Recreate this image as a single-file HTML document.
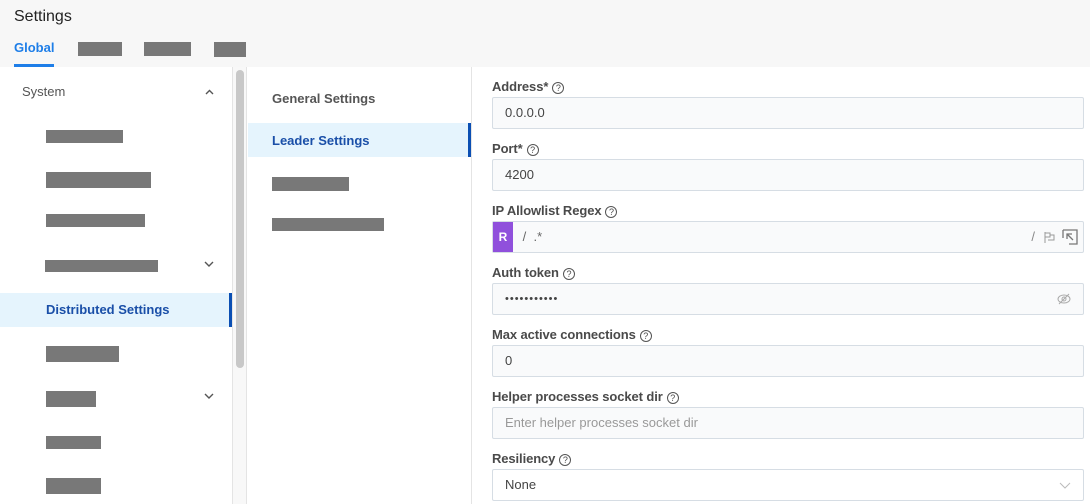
<!DOCTYPE html>
<html><head><style>
*{box-sizing:border-box;margin:0;padding:0}
body{width:1090px;height:504px;overflow:hidden;background:#fff;font-family:"Liberation Sans",sans-serif;position:relative;color:#333}
.a{position:absolute}
.r{position:absolute;background:#787878}
.lbl{position:absolute;left:492px;font-size:13px;font-weight:bold;color:#4a4a4a;letter-spacing:-0.1px}
.q{display:inline-block;width:12px;height:12px;border:1px solid #555;border-radius:50%;font-size:9px;line-height:10px;text-align:center;font-weight:normal;margin-left:4px;vertical-align:0px}
.in{position:absolute;left:492px;width:592px;height:32px;border:1px solid #d6dde4;background:#f9fafb;border-radius:2px;font-size:13px;color:#444;padding-left:12px;line-height:30px}
</style></head><body>
<div class="a" style="left:0;top:0;width:1090px;height:67px;background:#f7f7f7"></div>
<div class="a" style="left:14px;top:8px;font-size:16px;color:#222">Settings</div>
<div class="a" style="left:14px;top:40px;font-size:13px;font-weight:bold;color:#1e7ee8">Global</div>
<div class="a" style="left:14px;top:64px;width:40px;height:3px;background:#1e7ee8"></div>
<div class="r" style="left:78px;top:42px;width:44px;height:14px"></div>
<div class="r" style="left:144px;top:42px;width:47px;height:14px"></div>
<div class="r" style="left:214px;top:42px;width:32px;height:15px"></div>

<div class="a" style="left:22px;top:84px;font-size:13px;color:#555">System</div>
<svg class="a" style="left:205px;top:89px" width="9" height="6"><path d="M1 5l3.5-3.5L8 5" stroke="#555" stroke-width="1.4" fill="none"/></svg>
<div class="r" style="left:46px;top:130px;width:77px;height:13px"></div>
<div class="r" style="left:46px;top:172px;width:105px;height:16px"></div>
<div class="r" style="left:46px;top:214px;width:99px;height:13px"></div>
<div class="r" style="left:45px;top:260px;width:113px;height:12px"></div>
<svg class="a" style="left:204px;top:261px" width="10" height="6"><path d="M1 1l4 4 4-4" stroke="#555" stroke-width="1.4" fill="none"/></svg>
<div class="a" style="left:0;top:293px;width:232px;height:34px;background:#e5f4fd"></div>
<div class="a" style="left:229px;top:293px;width:3px;height:34px;background:#0b4fb3"></div>
<div class="a" style="left:46px;top:302px;font-size:13px;font-weight:bold;color:#1a4fa8">Distributed Settings</div>
<div class="r" style="left:46px;top:346px;width:73px;height:16px"></div>
<div class="r" style="left:46px;top:391px;width:50px;height:16px"></div>
<svg class="a" style="left:204px;top:393px" width="10" height="6"><path d="M1 1l4 4 4-4" stroke="#555" stroke-width="1.4" fill="none"/></svg>
<div class="r" style="left:46px;top:436px;width:55px;height:13px"></div>
<div class="r" style="left:46px;top:478px;width:55px;height:16px"></div>

<div class="a" style="left:232px;top:67px;width:15px;height:437px;background:#f8f8f8;border-left:1px solid #e4e4e4;border-right:1px solid #e4e4e4"></div>
<div class="a" style="left:236px;top:70px;width:8px;height:298px;background:#c8c8c8;border-radius:4px"></div>

<div class="a" style="left:471px;top:67px;width:1px;height:437px;background:#e4e4e4"></div>
<div class="a" style="left:272px;top:91px;font-size:13px;font-weight:bold;color:#555">General Settings</div>
<div class="a" style="left:248px;top:123px;width:223px;height:34px;background:#e5f4fd"></div>
<div class="a" style="left:468px;top:123px;width:3px;height:34px;background:#0b4fb3"></div>
<div class="a" style="left:272px;top:133px;font-size:13px;font-weight:bold;color:#1a4fa8">Leader Settings</div>
<div class="r" style="left:272px;top:177px;width:77px;height:14px"></div>
<div class="r" style="left:272px;top:218px;width:112px;height:13px"></div>

<div class="lbl" style="top:79px">Address*<span class="q">?</span></div>
<div class="in" style="top:97px">0.0.0.0</div>
<div class="lbl" style="top:141px">Port*<span class="q">?</span></div>
<div class="in" style="top:159px">4200</div>
<div class="lbl" style="top:203px">IP Allowlist Regex<span class="q">?</span></div>
<div class="in" style="top:221px;padding-left:0">
 <span style="display:inline-block;width:20px;height:30px;background:#9050dc;color:#fff;font-weight:bold;text-align:center;font-size:12px;vertical-align:top">R</span>
 <span style="color:#666;margin-left:6px">/ &nbsp;.*</span>
 <span class="a" style="right:48px;top:0;color:#888">/</span>
 <svg class="a" style="right:28px;top:9px" width="12" height="12"><path d="M2 1v11M2 2h5v4H2M7 4h4v5H5" stroke="#999" fill="none"/></svg>
 <svg class="a" style="right:5px;top:7px" width="16" height="16"><path d="M1 1h14v14H7M1 1v8M11 11L5 5M5 10V5h5" stroke="#777" stroke-width="1.3" fill="none"/></svg>
</div>
<div class="lbl" style="top:265px">Auth token<span class="q">?</span></div>
<div class="in" style="top:283px;letter-spacing:1px;font-size:11px">•••••••••••
 <svg class="a" style="right:12px;top:9px" width="14" height="12"><ellipse cx="7" cy="6" rx="6" ry="4" stroke="#aaa" fill="none"/><circle cx="7" cy="6" r="2" stroke="#aaa" fill="none"/><path d="M2 11L12 1" stroke="#aaa"/></svg>
</div>
<div class="lbl" style="top:327px">Max active connections<span class="q">?</span></div>
<div class="in" style="top:345px">0</div>
<div class="lbl" style="top:389px">Helper processes socket dir<span class="q">?</span></div>
<div class="in" style="top:407px;color:#999">Enter helper processes socket dir</div>
<div class="lbl" style="top:451px">Resiliency<span class="q">?</span></div>
<div class="in" style="top:469px;background:#fff">None
 <svg class="a" style="right:12px;top:12px" width="12" height="7"><path d="M1 1l5 5 5-5" stroke="#bbb" fill="none"/></svg>
</div>
</body></html>
